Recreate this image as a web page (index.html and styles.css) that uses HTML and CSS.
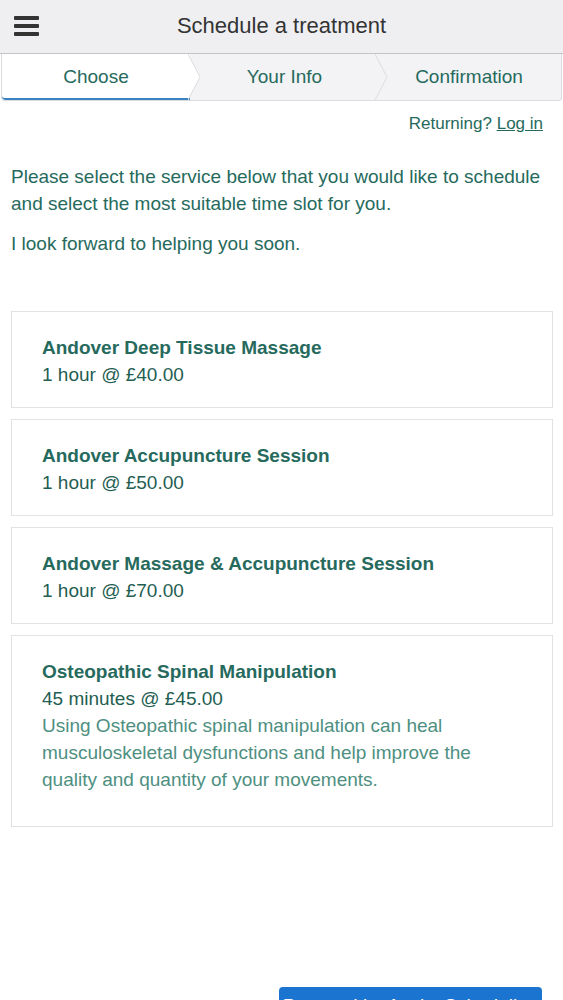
FILE: index.html
```html
<!DOCTYPE html>
<html>
<head>
<meta charset="utf-8">
<link rel="stylesheet" href="styles.css">
</head>
<body>
<header class="topbar">
  <div class="hamburger"><span></span><span></span><span></span></div>
  <h1 class="title">Schedule a treatment</h1>
</header>
<nav class="steps">
  <div class="step active">Choose
    <svg class="chev" width="14" height="46" viewBox="0 0 14 46"><polygon points="0,0 12,23 0,46" fill="#ffffff"/><polyline points="0,0 12,23 0,46" fill="none" stroke="#dcdcdf" stroke-width="1"/></svg>
  </div>
  <div class="step">Your Info
    <svg class="chev" width="14" height="46" viewBox="0 0 14 46"><polygon points="0,0 12,23 0,46" fill="#f3f3f5"/><polyline points="0,0 12,23 0,46" fill="none" stroke="#dcdcdf" stroke-width="1"/></svg>
  </div>
  <div class="step">Confirmation</div>
</nav>
<main class="content">
  <p class="returning">Returning? <a href="#">Log in</a></p>
  <p class="intro">Please select the service below that you would like to schedule and select the most suitable time slot for you.</p>
  <p class="intro second">I look forward to helping you soon.</p>
  <div class="services">
    <div class="card">
      <div class="name">Andover Deep Tissue Massage</div>
      <div class="meta">1 hour @ £40.00</div>
    </div>
    <div class="card">
      <div class="name">Andover Accupuncture Session</div>
      <div class="meta">1 hour @ £50.00</div>
    </div>
    <div class="card">
      <div class="name">Andover Massage &amp; Accupuncture Session</div>
      <div class="meta">1 hour @ £70.00</div>
    </div>
    <div class="card tall">
      <div class="name">Osteopathic Spinal Manipulation</div>
      <div class="meta">45 minutes @ £45.00</div>
      <div class="desc">Using Osteopathic spinal manipulation can heal musculoskeletal dysfunctions and help improve the quality and quantity of your movements.</div>
    </div>
  </div>
  <div class="footer">
    <a class="powered" href="#">Powered by Acuity Scheduling</a>
  </div>
</main>
</body>
</html>
```

FILE: styles.css
```css
* { box-sizing: border-box; }
html, body { margin: 0; padding: 0; }
body {
  font-family: "Liberation Sans", Arial, sans-serif;
  color: #266a5d;
  background: #ffffff;
  width: 563px;
  overflow: hidden;
}
.topbar {
  height: 54px;
  background: #efeff2;
  border-bottom: 1px solid #c4c4c7;
  display: flex;
  align-items: center;
  position: relative;
}
.hamburger {
  position: absolute;
  left: 14px;
  top: 16px;
  display: flex;
  flex-direction: column;
  gap: 4px;
}
.hamburger span {
  display: block;
  width: 25px;
  height: 4px;
  border-radius: 1px;
  background: #333333;
}
.title {
  flex: 1;
  margin: 0;
  text-align: center;
  font-size: 22px;
  font-weight: normal;
  color: #333333;
  padding-bottom: 2px;
}
.steps {
  display: grid;
  grid-template-columns: 188px 187px 1fr;
  height: 47px;
  margin: 0 1px 0 1px;
  border: 1px solid #dcdcdf;
  border-top: none;
  border-radius: 0 0 4px 4px;
  background: #f3f3f5;
}
.step {
  position: relative;
  display: flex;
  align-items: center;
  justify-content: center;
  font-size: 19px;
  color: #266a5d;
}
.step.active {
  background: #ffffff;
  border-bottom: 2px solid #3b82c4;
  border-radius: 0 0 0 4px;
  padding-top: 2px;
}
.step:nth-child(2) { padding-left: 2px; }
.step:nth-child(3) { padding-left: 0; }
.chev {
  position: absolute;
  right: -12px;
  top: 0;
  z-index: 2;
}
.content {
  padding: 0 10px 0 11px;
}
.returning {
  margin: 13px 10px 0 0;
  text-align: right;
  font-size: 17px;
  line-height: 20px;
}
.returning a { color: #266a5d; text-decoration: underline; }
.intro {
  margin: 29px 0 0 0;
  font-size: 19px;
  line-height: 27px;
}
.intro.second { margin-top: 13px; }
.services {
  margin-top: 54px;
  display: flex;
  flex-direction: column;
  gap: 11px;
}
.card {
  border: 1px solid #e2e2e6;
  padding: 22px 30px 19px 30px;
}
.card.tall { padding-bottom: 33px; }
.name {
  font-weight: bold;
  font-size: 19px;
  line-height: 27px;
}
.meta {
  font-size: 19px;
  line-height: 27px;
  color: #1f5e52;
}
.desc {
  font-size: 19px;
  line-height: 27px;
  color: #4e8f81;
}
.footer {
  margin-top: 160px;
  display: flex;
  justify-content: flex-end;
  padding-right: 11px;
}
.powered {
  display: block;
  width: 263px;
  height: 38px;
  background: #1b74d0;
  color: #ffffff;
  border-radius: 4px;
  text-decoration: none;
  font-size: 19px;
  text-align: center;
  line-height: 38px;
}
```
